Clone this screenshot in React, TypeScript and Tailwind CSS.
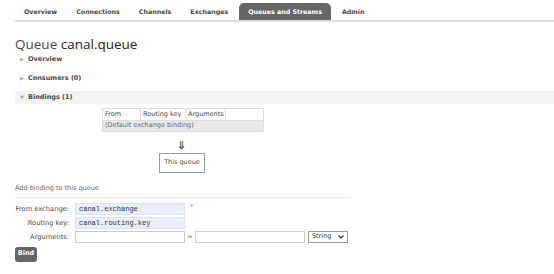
const tabs = ["Overview", "Connections", "Channels", "Exchanges", "Queues and Streams", "Admin"]

function Section({ label, open = false, band = false }: { label: string; open?: boolean; band?: boolean }) {
  return (
    <div className={`flex h-[13px] items-center pl-[5px] ${band ? "mr-[-15px] bg-[#f3f3f3]" : ""}`}>
      <span className="w-[8px] text-[5px] text-[#aaa]">{open ? "▼" : "▶"}</span>
      <span className="whitespace-nowrap text-[6.5px] font-bold text-[#484848]">{label}</span>
    </div>
  )
}

function Field({ label, children }: { label: string; children: React.ReactNode }) {
  return (
    <div className="flex h-[14px] items-center">
      <label className="w-[60px] whitespace-nowrap pr-[6px] text-right text-[6.7px] text-[#484848]">{label}</label>
      {children}
    </div>
  )
}

export default function App() {
  return (
    <div className="h-[274px] w-[554px] overflow-hidden bg-white font-['DejaVu_Sans',sans-serif] text-[#484848]">
      <div className="ml-[15px] flex h-[22px] items-end border-b-2 border-[#ddd]">
        {tabs.map((tab) => (
          <div
            key={tab}
            className={
              tab === "Queues and Streams"
                ? "ml-[1px] mr-[2px] flex h-[17px] items-center whitespace-nowrap rounded-t-[5px] bg-[#666] px-[9px] text-[6.3px] font-bold text-white"
                : "ml-[1px] mr-[2px] flex h-[17px] items-center whitespace-nowrap px-[8px] text-[6.3px] font-bold text-[#484848]"
            }
          >
            {tab}
          </div>
        ))}
      </div>

      <div className="px-[15px]">
        <h1 className="mt-[14px] h-[16px] whitespace-nowrap font-['Open_Sans',sans-serif] text-[13.5px] leading-[16px] text-[#484848]">
          Queue <span className="text-[#222]">canal.queue</span>
        </h1>

        <div className="mt-[1px]">
          <Section label="Overview" />
        </div>
        <div className="mt-[6px]">
          <Section label="Consumers (0)" />
        </div>
        <div className="mt-[6px]">
          <Section label="Bindings (1)" open band />
        </div>

        <table className="ml-[87px] mt-[4px] w-[161px] table-fixed border-collapse border border-[#ddd] text-[6.5px]">
          <thead>
            <tr className="h-[12px]">
              <th className="w-[38px] whitespace-nowrap border border-[#ddd] px-[2px] text-left font-normal">From</th>
              <th className="w-[45px] whitespace-nowrap border border-[#ddd] px-[2px] text-left font-normal">Routing key</th>
              <th className="w-[40px] whitespace-nowrap border border-[#ddd] px-[2px] text-left font-normal">Arguments</th>
              <th className="w-[38px] border border-[#ddd]"></th>
            </tr>
          </thead>
          <tbody>
            <tr className="h-[11px] bg-[#e8e8e8]">
              <td colSpan={4} className="whitespace-nowrap px-[2px] text-[#666]">(Default exchange binding)</td>
            </tr>
          </tbody>
        </table>
        <div className="ml-[162px] mt-[9px] h-[9px] text-[11px] font-bold leading-[9px] text-[#484848]">⇓</div>
        <div className="ml-[144px] mt-[3px] flex h-[20px] w-[46px] items-center justify-center whitespace-nowrap border border-[#999] text-[6.5px]">
          This queue
        </div>

        <div className="mt-[11px] w-[335px] border-b border-[#e5e5e5] pb-[3px] text-[6.5px] text-[#666]">
          Add binding to this queue
        </div>

        <div className="mt-[4px] flex flex-col">
          <Field label="From exchange:">
            <div className="flex h-[12px] w-[110px] items-center border border-[#dde4f0] bg-[#e8eefa] px-[3px] font-['Liberation_Mono',monospace] text-[7px] text-[#333]">
              canal.exchange
            </div>
            <span className="ml-[5px] mt-[-4px] text-[7px] text-[#f66]">*</span>
          </Field>
          <Field label="Routing key:">
            <div className="flex h-[12px] w-[110px] items-center border border-[#dde4f0] bg-[#e8eefa] px-[3px] font-['Liberation_Mono',monospace] text-[7px] text-[#333]">
              canal.routing.key
            </div>
          </Field>
          <Field label="Arguments:">
            <div className="h-[12px] w-[110px] border border-[#ccc] bg-white" />
            <span className="mx-[2px] text-[7px] text-[#888]">=</span>
            <div className="h-[12px] w-[110px] border border-[#ccc] bg-white" />
            <div className="ml-[3px] flex h-[12px] w-[40px] items-center justify-between border border-[#999] bg-white px-[3px] text-[6.5px] text-[#333]">
              <span>String</span>
              <svg width="6" height="4" viewBox="0 0 6 4">
                <path d="M0.5 0.5 L3 3 L5.5 0.5" fill="none" stroke="#333" strokeWidth="1.2" />
              </svg>
            </div>
          </Field>
        </div>

        <button className="mt-[3px] flex h-[15px] w-[22px] items-center justify-center rounded-[3px] bg-[#666] text-[6.5px] font-bold text-white">
          Bind
        </button>
      </div>
    </div>
  )
}
